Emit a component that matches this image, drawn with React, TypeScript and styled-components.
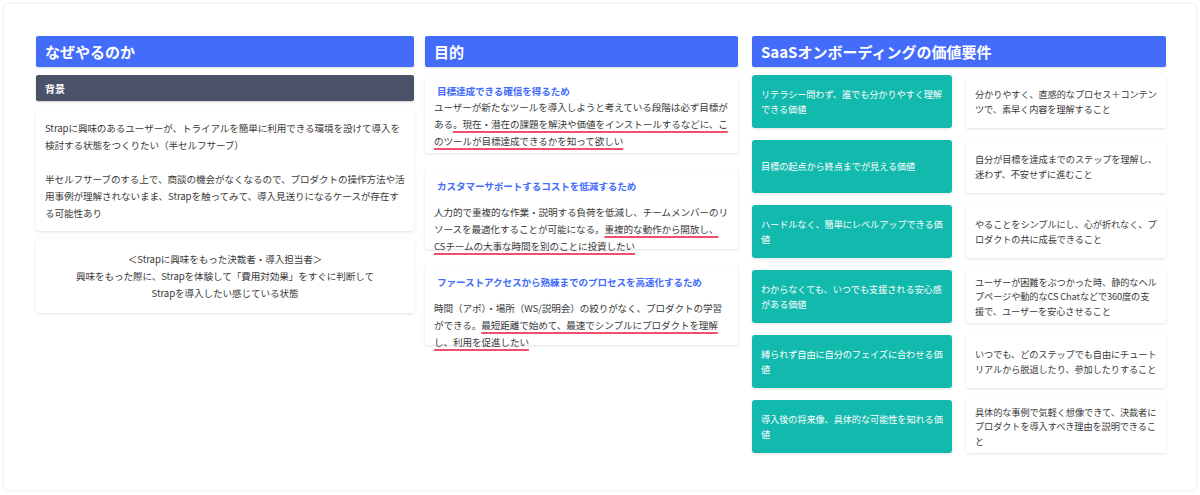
import React from "react";
import styled, { createGlobalStyle } from "styled-components";

const Global = createGlobalStyle`
  html, body { margin: 0; padding: 0; background: #fff; }
  body { font-family: "Noto Sans CJK JP", "Noto Sans", sans-serif; color: #3a3a3a; }
  * { box-sizing: border-box; }
`;

const Frame = styled.div`
  margin: 4px;
  width: 1192px;
  height: 486px;
  border-radius: 4px;
  box-shadow: 0 0 3px rgba(0,0,0,0.15);
  padding: 32px 27px 0 32px;
  display: grid;
  grid-template-columns: 378px 316px 414px;
  column-gap: 11px;
  & > :nth-child(2) { margin-right: 3px; }
`;

const Col = styled.div`
  display: flex;
  flex-direction: column;
`;

const Header = styled.div`
  height: 31px;
  background: #446cfb;
  color: #fff;
  font-weight: 700;
  font-size: 15px;
  border-radius: 2px;
  display: flex;
  align-items: center;
  padding: 0 9px;
  box-shadow: 0 1px 2px rgba(0,0,0,0.15);
  margin-bottom: 8px;
`;

const SubHeader = styled.div`
  height: 26px;
  background: #4b5166;
  color: #fff;
  font-weight: 700;
  font-size: 10px;
  border-radius: 2px;
  display: flex;
  align-items: center;
  padding: 0 9px;
  margin-bottom: 10px;
  box-shadow: 0 1px 2px rgba(0,0,0,0.2);
`;

const Card = styled.div<{ $center?: boolean; $gap?: number; $h?: number }>`
  background: #fff;
  border-radius: 3px;
  box-shadow: 0 1px 3px rgba(0,0,0,0.12);
  font-size: 9.6px;
  line-height: 17px;
  letter-spacing: -0.1px;
  padding: 9px 9px;
  margin-bottom: ${p => p.$gap ?? 8}px;
  text-align: ${p => (p.$center ? "center" : "left")};
  ${p => (p.$h ? `height: ${p.$h}px;` : "")}
`;

const Para = styled.p<{ $mt?: number }>`
  margin: ${p => p.$mt ?? 0}px 0 0;
`;

const Title = styled.div<{ $mb?: number }>`
  color: #446cfb;
  font-weight: 700;
  font-size: 9.6px;
  line-height: 15px;
  padding-left: 3px;
  margin-bottom: ${p => p.$mb ?? 0}px;
`;

const Mark = styled.span`
  text-decoration: underline;
  text-decoration-color: #f0506e;
  text-decoration-thickness: 2px;
  text-underline-offset: 3px;
`;

const Rows = styled.div`
  display: flex;
  flex-direction: column;
  gap: 12px;
`;

const Row = styled.div`
  display: grid;
  grid-template-columns: 200px 200px;
  column-gap: 14px;
`;

const Cell = styled.div<{ $teal?: boolean }>`
  height: 53px;
  border-radius: 3px;
  background: ${p => (p.$teal ? "#12b9ad" : "#fff")};
  color: ${p => (p.$teal ? "#fff" : "#3a3a3a")};
  box-shadow: 0 1px 3px rgba(0,0,0,0.12);
  font-size: 9.2px;
  line-height: 14.5px;
  letter-spacing: -0.1px;
  padding: 0 9px;
  display: flex;
  align-items: center;
`;

const rows: [string, string][] = [
  ["リテラシー問わず、誰でも分かりやすく理解できる価値", "分かりやすく、直感的なプロセス＋コンテンツで、素早く内容を理解すること"],
  ["目標の起点から終点までが見える価値", "自分が目標を達成までのステップを理解し、迷わず、不安せずに進むこと"],
  ["ハードルなく、簡単にレベルアップできる価値", "やることをシンプルにし、心が折れなく、プロダクトの共に成長できること"],
  ["わからなくても、いつでも支援される安心感がある価値", "ユーザーが困難をぶつかった時、静的なヘルプページや動的なCS Chatなどで360度の支援で、ユーザーを安心させること"],
  ["縛られず自由に自分のフェイズに合わせる価値", "いつでも、どのステップでも自由にチュートリアルから脱退したり、参加したりすること"],
  ["導入後の将来像、具体的な可能性を知れる価値", "具体的な事例で気軽く想像できて、決裁者にプロダクトを導入すべき理由を説明できること"],
];

export default function App() {
  return (
    <>
      <Global />
      <Frame>
        <Col>
          <Header>なぜやるのか</Header>
          <SubHeader>背景</SubHeader>
          <Card>
            <Para>Strapに興味のあるユーザーが、トライアルを簡単に利用できる環境を設けて導入を検討する状態をつくりたい（半セルフサーブ）</Para>
            <Para $mt={17}>半セルフサーブのする上で、商談の機会がなくなるので、プロダクトの操作方法や活用事例が理解されないまま、Strapを触ってみて、導入見送りになるケースが存在する可能性あり</Para>
          </Card>
          <Card $center style={{ padding: "12px 9px 11px" }}>
            ＜Strapに興味をもった決裁者・導入担当者＞<br />
            興味をもった際に、Strapを体験して「費用対効果」をすぐに判断して<br />
            Strapを導入したい感じている状態
          </Card>
        </Col>
        <Col>
          <Header>目的</Header>
          <Card $gap={16} $h={78}>
            <Title>目標達成できる確信を得るため</Title>
            ユーザーが新たなツールを導入しようと考えている段階は必ず目標がある<Mark>。現在・潜在の課題を解決や価値をインストールするなどに、このツールが目標達成できるかを知って欲しい</Mark>
          </Card>
          <Card $gap={16} $h={80} style={{ paddingTop: 10 }}>
            <Title $mb={10}>カスタマーサポートするコストを低減するため</Title>
            人力的で重複的な作業・説明する負荷を低減し、チームメンバーのリソースを最適化することが可能になる。<Mark>重複的な動作から開放し、CSチームの大事な時間を別のことに投資したい</Mark>
          </Card>
          <Card $h={80} style={{ paddingTop: 10 }}>
            <Title $mb={10}>ファーストアクセスから熟練までのプロセスを高速化するため</Title>
            時間（アポ）・場所（WS/説明会）の絞りがなく、プロダクトの学習ができる。<Mark>最短距離で始めて、最速でシンプルにプロダクトを理解し、利用を促進したい</Mark>
          </Card>
        </Col>
        <Col>
          <Header>SaaSオンボーディングの価値要件</Header>
          <Rows>
            {rows.map(([a, b]) => (
              <Row key={a}>
                <Cell $teal>{a}</Cell>
                <Cell>{b}</Cell>
              </Row>
            ))}
          </Rows>
        </Col>
      </Frame>
    </>
  );
}
